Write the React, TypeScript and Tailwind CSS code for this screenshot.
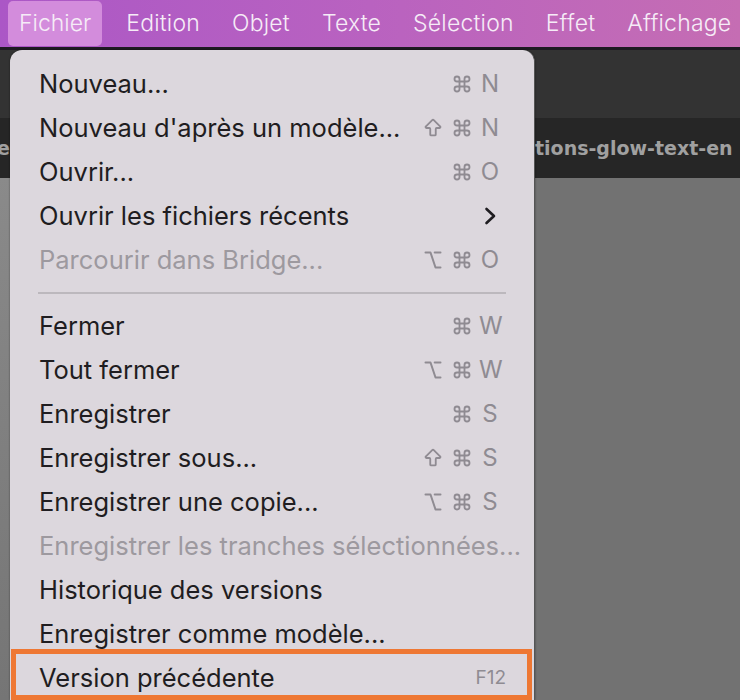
import React from "react";
import { Command, ArrowBigUp, Option } from "lucide-react";

type Item =
  | { kind: "item"; label: string; keys?: string[]; disabled?: boolean; submenu?: boolean; fkey?: string }
  | { kind: "sep" };

const topMenus = ["Fichier", "Edition", "Objet", "Texte", "Sélection", "Effet", "Affichage"];

const items: Item[] = [
  { kind: "item", label: "Nouveau...", keys: ["cmd", "N"] },
  { kind: "item", label: "Nouveau d'après un modèle...", keys: ["shift", "cmd", "N"] },
  { kind: "item", label: "Ouvrir...", keys: ["cmd", "O"] },
  { kind: "item", label: "Ouvrir les fichiers récents", submenu: true },
  { kind: "item", label: "Parcourir dans Bridge...", keys: ["opt", "cmd", "O"], disabled: true },
  { kind: "sep" },
  { kind: "item", label: "Fermer", keys: ["cmd", "W"] },
  { kind: "item", label: "Tout fermer", keys: ["opt", "cmd", "W"] },
  { kind: "item", label: "Enregistrer", keys: ["cmd", "S"] },
  { kind: "item", label: "Enregistrer sous...", keys: ["shift", "cmd", "S"] },
  { kind: "item", label: "Enregistrer une copie...", keys: ["opt", "cmd", "S"] },
  { kind: "item", label: "Enregistrer les tranches sélectionnées...", disabled: true },
  { kind: "item", label: "Historique des versions" },
  { kind: "item", label: "Enregistrer comme modèle..." },
  { kind: "item", label: "Version précédente", fkey: "F12" },
];

function Mod({ name }: { name: string }) {
  const cls = "h-[20px] w-[20px]";
  if (name === "cmd") return <Command className={cls} strokeWidth={2.2} />;
  if (name === "shift") return <ArrowBigUp className="h-[22px] w-[22px]" strokeWidth={2} />;
  return <Option className={cls} strokeWidth={2.4} />;
}

function Shortcut({ keys }: { keys: string[] }) {
  const mods = keys.slice(0, -1);
  const key = keys[keys.length - 1];
  return (
    <span className="flex items-center text-[#8f8b92] text-[24px]">
      {mods.map((m, i) => (
        <span key={i} className="flex w-[29px] justify-center">
          <Mod name={m} />
        </span>
      ))}
      <span className="ml-[3px] w-[22px] text-center">{key}</span>
    </span>
  );
}

export default function App() {
  return (
    <div className="relative h-[700px] w-[740px] overflow-hidden bg-[#727272] font-['Inter',sans-serif]">
      {/* menu bar */}
      <div className="flex h-[47px] items-center whitespace-nowrap bg-gradient-to-r from-[#ab57c6] via-[#b962c0] to-[#c56db3] pl-[8px] text-[23px] font-light text-[#f6ecf7]">
        {topMenus.map((m, i) => (
          <div
            key={m}
            className={
              i === 0
                ? "mr-[8px] flex h-[45px] items-center rounded-[5px] bg-[#d38cdc] px-[11px]"
                : "flex h-[45px] items-center px-[16px] tracking-[0.2px]"
            }
          >
            {m}
          </div>
        ))}
      </div>
      <div className="h-[3px] bg-[#1e1a22]" />
      {/* toolbar */}
      <div className="h-[68px] bg-[#333333]" />
      {/* tab bar */}
      <div className="relative flex h-[60px] items-center overflow-hidden whitespace-nowrap bg-[#262626] font-['DejaVu_Sans',sans-serif] text-[19px] font-bold text-[#a0a0a0]">
        <span className="absolute left-[-3px]">er</span>
        <span className="absolute left-[535px]">tions-glow-text-en</span>
      </div>
      <div className="h-full w-[12px] bg-gradient-to-b from-[#8a8a8a] to-[#6e6e6e]" />

      {/* dropdown */}
      <div className="absolute left-[10px] top-[50px] w-[525px] rounded-t-[12px] border-r border-[#555] bg-[#dcd7dd] pt-[12px] text-[25.5px] text-[#1f1d21] shadow-[0_0_2px_rgba(0,0,0,0.5)]">
        {items.map((it, i) =>
          it.kind === "sep" ? (
            <div key={i} className="flex h-[22px] items-center pl-[28px] pr-[28px]">
              <div className="h-[2px] w-full bg-[#bcb8bd]" />
            </div>
          ) : (
            <div
              key={i}
              className={
                "relative flex h-[44px] items-center justify-between pl-[29px] pr-[33px] " +
                (it.disabled ? "text-[#9d999f]" : "")
              }
            >
              <span className="whitespace-nowrap">{it.label}</span>
              {it.keys && <Shortcut keys={it.keys} />}
              {it.submenu && (
                <svg width="13" height="18" viewBox="0 0 13 18" className="mr-[4px]">
                  <path d="M2.5 2 L10 9 L2.5 16" fill="none" stroke="#1f1d21" strokeWidth="2.6" strokeLinecap="round" strokeLinejoin="round" />
                </svg>
              )}
              {it.fkey && <span className="mr-[-5px] text-[19px] text-[#8f8b92]">{it.fkey}</span>}
              {it.fkey && (
                <div className="pointer-events-none absolute bottom-[0px] left-[1px] right-[2px] top-[-7px] border-[5px] border-[#ee7733]" />
              )}
            </div>
          )
        )}
      </div>
    </div>
  );
}
